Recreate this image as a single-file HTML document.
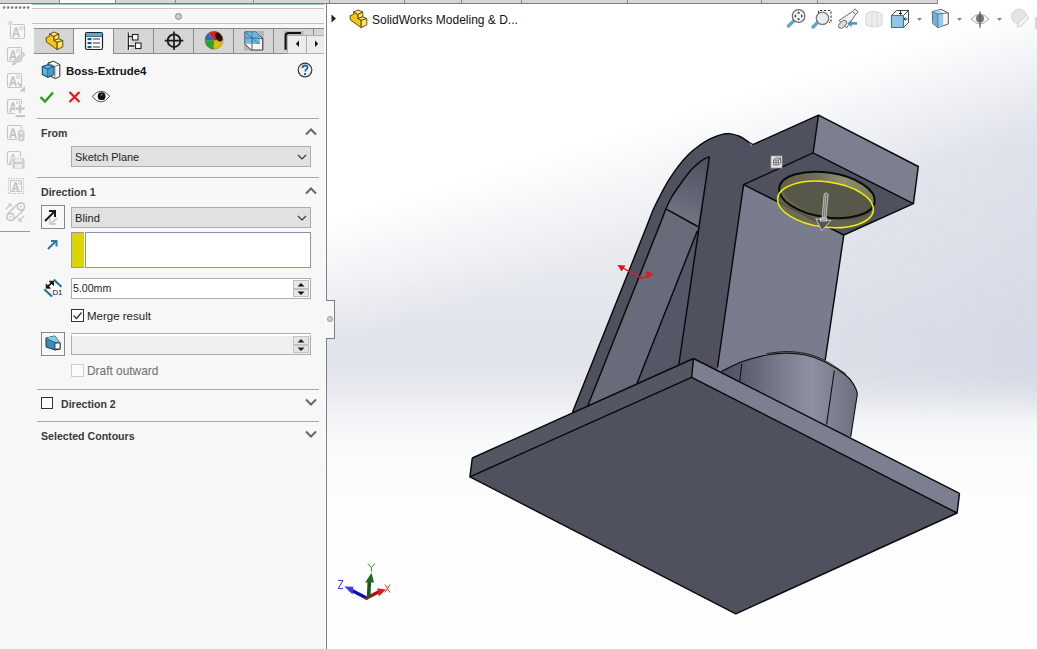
<!DOCTYPE html>
<html><head><meta charset="utf-8">
<style>
*{margin:0;padding:0;box-sizing:border-box}
html,body{width:1037px;height:649px;overflow:hidden;background:#fff;font-family:"Liberation Sans",sans-serif;position:relative}
.a{position:absolute}
.hl{position:absolute;height:1px;background:#a9a9a9}
.txt{position:absolute;white-space:nowrap;color:#1e1e1e;font-size:11px;line-height:13px}
.hdr{position:absolute;white-space:nowrap;color:#3a3a3a;font-size:10.6px;font-weight:bold;line-height:13px}
.dd{position:absolute;background:#e1e1e1;border:1px solid #adadad}
.chev{position:absolute}
</style></head><body>
<!-- top tab strip -->
<div class="a" style="left:0;top:0;width:938px;height:3px;background:#d6d6d6"></div>
<div class="a" style="left:60px;top:0;width:55px;height:3px;background:#fafafa"></div>
<div class="a" style="left:59px;top:0;width:1px;height:3px;background:#8a8a8a"></div><div class="a" style="left:115px;top:0;width:1px;height:3px;background:#8a8a8a"></div><div class="a" style="left:175px;top:0;width:1px;height:3px;background:#8a8a8a"></div><div class="a" style="left:253px;top:0;width:1px;height:3px;background:#8a8a8a"></div><div class="a" style="left:329px;top:0;width:1px;height:3px;background:#8a8a8a"></div><div class="a" style="left:404px;top:0;width:1px;height:3px;background:#8a8a8a"></div><div class="a" style="left:461px;top:0;width:1px;height:3px;background:#8a8a8a"></div><div class="a" style="left:521px;top:0;width:1px;height:3px;background:#8a8a8a"></div><div class="a" style="left:627px;top:0;width:1px;height:3px;background:#8a8a8a"></div><div class="a" style="left:761px;top:0;width:1px;height:3px;background:#8a8a8a"></div><div class="a" style="left:817px;top:0;width:1px;height:3px;background:#8a8a8a"></div><div class="a" style="left:937px;top:0;width:1px;height:3px;background:#8a8a8a"></div>
<div class="a" style="left:0;top:3px;width:938px;height:1px;background:#7d7d7d"></div>

<!-- left icon toolbar -->
<div class="a" style="left:0;top:4px;width:32px;height:645px;background:#f7f7f7"></div>
<div class="a" style="left:0;top:231px;width:30px;height:1px;background:#9a9a9a"></div>

<!-- property manager panel -->
<div class="a" style="left:32px;top:4px;width:294px;height:645px;background:#f7f7f7"></div>
<div class="a" style="left:32px;top:4px;width:292px;height:1px;background:#a3c3c6"></div>
<div class="a" style="left:32px;top:5px;width:292px;height:3px;background:#fbfbfb"></div>
<div class="a" style="left:32px;top:8px;width:292px;height:1px;background:#c4c4c4"></div>
<div class="a" style="left:175px;top:13px;width:7px;height:7px;border-radius:50%;background:#cfcfcf;border:1px solid #8a8a8a"></div>
<div class="a" style="left:32px;top:23px;width:292px;height:1px;background:#c0c0c0"></div>
<div class="a" style="left:324px;top:4px;width:2px;height:20px;background:#fdfdfd"></div><div class="a" style="left:325px;top:24px;width:1px;height:625px;background:#fcfcfc"></div>
<div class="a" style="left:326px;top:4px;width:1px;height:645px;background:#7f7f7f"></div>


<!-- left toolbar icons -->
<svg class="a" style="left:0;top:0" width="32" height="232" viewBox="0 0 32 232">
<rect x="0" y="4" width="32" height="6" fill="#fdfdfd"/>
<rect x="10.5" y="24.5" width="14" height="14" rx="1.5" fill="none" stroke="#c6c6c6" stroke-width="1.1"/>
<path d="M12.0,37.2 L14.9,27.2 H17.1 L20.0,37.2 H18.0 L17.4,34.8 H14.6 L14.0,37.2 Z M15.1,33.0 H16.9 L16.0,29.6 Z" fill="#c6c6c6" fill-rule="evenodd"/>
<circle cx="21.3" cy="28.2" r="1.6" fill="none" stroke="#c6c6c6" stroke-width="0.9"/>
<rect x="8" y="21" width="4.5" height="4.5" fill="#f7f7f7"/><path d="M10.3,20.5 v5 M7.8,23 h5 M8.5,21.2 l3.6,3.6 M12.1,21.2 l-3.6,3.6" stroke="#c6c6c6" stroke-width="0.7"/>
<rect x="7.5" y="47.5" width="14" height="14" rx="1.5" fill="none" stroke="#c6c6c6" stroke-width="1.1"/>
<path d="M9.0,60.3 L11.9,50.3 H14.1 L17.0,60.3 H15.0 L14.4,57.9 H11.6 L11.0,60.3 Z M12.1,56.1 H13.9 L13.0,52.7 Z" fill="#c6c6c6" fill-rule="evenodd"/>
<circle cx="18" cy="50.8" r="1.6" fill="none" stroke="#c6c6c6" stroke-width="0.9"/>
<path d="M12.5,65 L13.5,61 L22.5,52 L25,54.5 L16,63.5 Z" fill="#d4d4d4" stroke="#bdbdbd" stroke-width="0.8"/>
<rect x="7.5" y="73.5" width="14" height="14" rx="1.5" fill="none" stroke="#c6c6c6" stroke-width="1.1"/>
<path d="M9.0,86.3 L11.9,76.3 H14.1 L17.0,86.3 H15.0 L14.4,83.9 H11.6 L11.0,86.3 Z M12.1,82.1 H13.9 L13.0,78.7 Z" fill="#c6c6c6" fill-rule="evenodd"/>
<circle cx="18" cy="76.8" r="1.6" fill="none" stroke="#c6c6c6" stroke-width="0.9"/>
<path d="M17.5,82.5 L22,87" stroke="#c6c6c6" stroke-width="2"/><path d="M25,91.5 H19.5 L25,86 Z" fill="#c6c6c6"/>
<rect x="7.5" y="99.5" width="14" height="14" rx="1.5" fill="none" stroke="#c6c6c6" stroke-width="1.1"/>
<path d="M9.0,112.3 L11.9,102.3 H14.1 L17.0,112.3 H15.0 L14.4,109.9 H11.6 L11.0,112.3 Z M12.1,108.1 H13.9 L13.0,104.7 Z" fill="#c6c6c6" fill-rule="evenodd"/>
<circle cx="18" cy="102.8" r="1.6" fill="none" stroke="#c6c6c6" stroke-width="0.9"/>
<rect x="15" y="104" width="10" height="10" fill="#f7f7f7"/><path d="M20,104.5 v8.5 M15.7,108.7 h9" stroke="#c6c6c6" stroke-width="2.2"/><rect x="15.7" y="115" width="9.3" height="2.2" fill="#c6c6c6"/>
<rect x="7.5" y="125.5" width="14" height="14" rx="1.5" fill="none" stroke="#c6c6c6" stroke-width="1.1"/>
<path d="M9.0,138.3 L11.9,128.3 H14.1 L17.0,138.3 H15.0 L14.4,135.9 H11.6 L11.0,138.3 Z M12.1,134.1 H13.9 L13.0,130.7 Z" fill="#c6c6c6" fill-rule="evenodd"/>
<rect x="17.5" y="129" width="7.5" height="13" rx="3.7" fill="#cfcfcf" stroke="#f7f7f7" stroke-width="0.8"/><circle cx="21.2" cy="132.8" r="1.3" fill="#eee"/><circle cx="21.2" cy="138.2" r="1.3" fill="#eee"/>
<rect x="7.5" y="151.5" width="13" height="13" rx="1.5" fill="none" stroke="#c6c6c6" stroke-width="1.1"/>
<path d="M9.0,164.3 L11.9,154.3 H14.1 L17.0,164.3 H15.0 L14.4,161.9 H11.6 L11.0,164.3 Z M12.1,160.1 H13.9 L13.0,156.7 Z" fill="#c6c6c6" fill-rule="evenodd"/>
<path d="M12,157.5 h11 l2,2 v9.5 h-13 z" fill="#d0d0d0" stroke="#f7f7f7" stroke-width="0.8"/><rect x="15" y="158.5" width="7" height="3.5" fill="#eee"/><rect x="15" y="164" width="7" height="4" fill="#eee"/>
<rect x="8.5" y="178.5" width="15" height="15" fill="none" stroke="#c6c6c6" stroke-width="1.1" stroke-dasharray="1.5,1"/>
<rect x="10.5" y="180.5" width="11" height="11" fill="none" stroke="#c6c6c6" stroke-width="0.9"/>
<path d="M11.5,192.0 L14.4,182.0 H16.6 L19.5,192.0 H17.5 L16.9,189.6 H14.1 L13.5,192.0 Z M14.6,187.8 H16.4 L15.5,184.4 Z" fill="#c6c6c6" fill-rule="evenodd"/>
<circle cx="19.5" cy="183" r="1.4" fill="none" stroke="#c6c6c6" stroke-width="0.8"/>
<circle cx="10.5" cy="217" r="3.6" fill="none" stroke="#c6c6c6" stroke-width="1.6"/><circle cx="21" cy="206.5" r="3.6" fill="none" stroke="#c6c6c6" stroke-width="1.6"/><circle cx="10.5" cy="217" r="1" fill="#c6c6c6"/><circle cx="21" cy="206.5" r="1" fill="#c6c6c6"/>
<path d="M7.5,214 L18,203.5 M13.5,220 L24,209.5" stroke="#c6c6c6" stroke-width="1.4"/>
<path d="M6,209 l5,-5 M8,204 h3 v3 M19,221 l5,-5 M19,218 v3 h3" fill="none" stroke="#c6c6c6" stroke-width="1.1"/>
<circle cx="4" cy="7.5" r="1.3" fill="#6e6e6e"/><circle cx="3.5" cy="7" r="0.5" fill="#ddd"/><circle cx="8" cy="7.5" r="1.3" fill="#6e6e6e"/><circle cx="7.5" cy="7" r="0.5" fill="#ddd"/><circle cx="12" cy="7.5" r="1.3" fill="#6e6e6e"/><circle cx="11.5" cy="7" r="0.5" fill="#ddd"/><circle cx="16" cy="7.5" r="1.3" fill="#6e6e6e"/><circle cx="15.5" cy="7" r="0.5" fill="#ddd"/><circle cx="20" cy="7.5" r="1.3" fill="#6e6e6e"/><circle cx="19.5" cy="7" r="0.5" fill="#ddd"/><circle cx="24" cy="7.5" r="1.3" fill="#6e6e6e"/><circle cx="23.5" cy="7" r="0.5" fill="#ddd"/><circle cx="28" cy="7.5" r="1.3" fill="#6e6e6e"/><circle cx="27.5" cy="7" r="0.5" fill="#ddd"/>
</svg>

<!-- tab bar -->
<div class="a" style="left:34px;top:28px;width:290px;height:1px;background:#8a8a8a"></div>
<div class="a" style="left:34px;top:29px;width:290px;height:24px;background:#d5d5d5"></div>
<div class="a" style="left:34px;top:53px;width:290px;height:1px;background:#8a8a8a"></div>
<div class="a" style="left:74px;top:29px;width:39px;height:25px;background:#f7f7f7"></div>
<div class="a" style="left:73px;top:29px;width:1px;height:25px;background:#8a8a8a"></div>
<div class="a" style="left:113px;top:29px;width:1px;height:25px;background:#8a8a8a"></div>
<div class="a" style="left:153px;top:29px;width:1px;height:25px;background:#8a8a8a"></div>
<div class="a" style="left:193px;top:29px;width:1px;height:25px;background:#8a8a8a"></div>
<div class="a" style="left:233px;top:29px;width:1px;height:25px;background:#8a8a8a"></div>
<div class="a" style="left:273px;top:29px;width:1px;height:25px;background:#8a8a8a"></div>
<div class="a" style="left:313px;top:29px;width:1px;height:25px;background:#8a8a8a"></div>
<!-- tab icons -->
<svg class="a" style="left:34px;top:29px" width="290" height="25" viewBox="34 29 290 25">
 <!-- part icon -->
 <g stroke="#5a4000" stroke-width="0.9" stroke-linejoin="round">
 <path d="M46,37.8 L49.6,36.2 L49.6,34 L54,36.5 L54,40.5 L57.2,42.3 L57.2,49.6 L46.4,42 Z" fill="#f2c414"/>
 <path d="M49.6,34 L54,32 L58.8,34 L54,36.5 Z" fill="#ffe47a"/>
 <path d="M54,36.5 L58.8,34 L58.8,38.8 L54,40.5 Z" fill="#ffe45a"/>
 <path d="M54,40.5 L58.8,38.8 L62.8,40.5 L57.2,42.3 Z" fill="#ffec90"/>
 <path d="M57.2,42.3 L62.8,40.5 L62.8,46.8 L57.2,49.6 Z" fill="#ffe660"/>
 </g>
 <!-- property manager icon -->
 <rect x="85.5" y="32.5" width="17" height="17" rx="1.5" fill="#fff" stroke="#222" stroke-width="1.2"/>
 <rect x="86" y="33" width="16" height="3" fill="#5aa8d8"/>
 <path d="M86,36.5 h16" stroke="#1a4a6a" stroke-width="0.8"/>
 <rect x="87.5" y="38" width="4" height="2.2" fill="#1a5a8a"/><rect x="87.5" y="42" width="4" height="2.2" fill="#1a5a8a"/><rect x="87.5" y="46" width="4" height="2.2" fill="#1a5a8a"/>
 <path d="M93,39 h7 M93,43 h7 M93,47 h7" stroke="#333" stroke-width="1"/>
 <!-- config tree icon -->
 <path d="M128.3,32.5 v17.5 M128.3,36.5 h4 M128.3,46 h6" stroke="#fff" stroke-width="3.2" fill="none"/>
 <path d="M128.3,32.5 v17.5 M128.3,36.5 h4 M128.3,46 h6" stroke="#222" stroke-width="1.3" fill="none"/>
 <rect x="132.5" y="34.5" width="5.5" height="5.5" fill="#fff" stroke="#222" stroke-width="1.1"/><rect x="135.5" y="43" width="5.5" height="5.5" fill="#fff" stroke="#222" stroke-width="1.1"/>
 <!-- target/crosshair -->
 <circle cx="174" cy="40.7" r="6.3" fill="none" stroke="#1a1a1a" stroke-width="1.8"/>
 <path d="M174,31.5 v18.5 M164.8,40.7 h18.5" stroke="#1a1a1a" stroke-width="1.7"/>
 <!-- display manager ball -->
 <circle cx="214" cy="40.2" r="9" fill="#e0b818"/>
 <path d="M214,40.2 H205 A9,9 0 0 1 209,32.8 Z" fill="#2a6ad8"/>
 <path d="M214,40.2 L209,32.8 A9,9 0 0 1 223,40.2 Z" fill="#e02020"/>
 <path d="M214,40.2 H205 A9,9 0 0 0 213.5,49.2 Z" fill="#30a030"/>
 <ellipse cx="218.8" cy="37" rx="2.8" ry="4.8" transform="rotate(-30 218.8 37)" fill="#1a1a1a"/>
 <circle cx="214" cy="40.2" r="9" fill="none" stroke="#6a4a10" stroke-width="0.6" opacity="0.6"/>
 <!-- dimxpert -->
 <rect x="244" y="31" width="20" height="19.5" fill="#b4b4b4"/>
 <path d="M245,32 h10.5 l7.2,6.5 v11.5 h-11.5 l-6.2,-5.8 z" fill="#f4f4f4" stroke="#333" stroke-width="0.9"/>
 <path d="M245,32 l7,6.5 h10.7 M252,38.5 v11.5" fill="none" stroke="#333" stroke-width="0.8"/>
 <path d="M245,32 h10.5 l4.5,4 v8 h-8 l-7,-0.5 z" fill="#5aaad8" opacity="0.85"/>
 <path d="M245,32 l14,12 M245,38 h14 M252,32 v12" stroke="#1e6a98" stroke-width="0.7"/>
 <!-- partial tab -->
 <rect x="284" y="31" width="19.5" height="19.5" fill="#b8b8b8"/>
 <path d="M285.6,49.8 V36 q0,-3 3,-3 H301" fill="none" stroke="#111" stroke-width="2"/>
</svg>
<!-- scroll buttons -->
<div class="a" style="left:287px;top:35px;width:37px;height:19px;background:#b0b0b0"></div>
<div class="a" style="left:288px;top:36px;width:18px;height:17px;background:#ececec"></div>
<div class="a" style="left:307px;top:36px;width:17px;height:17px;background:#ececec"></div>
<svg class="a" style="left:287px;top:35px" width="37" height="19"><path d="M12,5.5 l-3.2,3.2 l3.2,3.2 z M28,5.5 v6.4 l3.2,-3.2 z" fill="#111"/></svg>
<!-- header -->
<svg class="a" style="left:38px;top:58px" width="26" height="24" viewBox="38 58 26 24">
 <path d="M48,63 L53.5,61.2 L59.8,64.6 V76.6 L55.4,78.6 L49.5,75.6 Z" fill="#fbfbfb" stroke="#2a2a2a" stroke-width="1"/>
 <path d="M48,63 L54.8,66.4 L59.8,64.6 M54.8,66.4 V78.2" fill="none" stroke="#555" stroke-width="0.8"/>
 <path d="M55.5,67 V77.5" stroke="#cfcfcf" stroke-width="1.2"/>
 <path d="M42.3,66.6 L48.2,64.6 L53.8,66.9 V74.6 L47.9,77.2 L42.3,74.6 Z" fill="#62b2dc" stroke="#0c4a70" stroke-width="1.1" stroke-linejoin="round"/>
 <path d="M42.3,66.6 L47.9,69 L53.8,66.9 M47.9,69 V77.2" fill="none" stroke="#0c4a70" stroke-width="0.9"/>
 <path d="M48.4,69.6 L53.3,67.7 V74.3 L48.4,76.4 Z" fill="#4a9ccb"/>
</svg>
<div class="txt" style="left:66px;top:64px;font-size:11.4px;font-weight:bold;color:#141420;line-height:14px">Boss-Extrude4</div>
<svg class="a" style="left:297px;top:62px" width="16" height="16" viewBox="0 0 16 16">
 <circle cx="8" cy="8" r="6.8" fill="#f0f0f0" stroke="#333" stroke-width="1.2"/>
 <path d="M5.5,6 q0,-2.5 2.5,-2.5 q2.5,0 2.5,2.2 q0,1.5 -2,2.3 v1.5" fill="none" stroke="#1a6aa0" stroke-width="1.8"/>
 <rect x="7" y="11" width="2" height="2" fill="#1a6aa0"/>
</svg>
<svg class="a" style="left:38px;top:89px" width="76" height="16" viewBox="0 0 76 16">
 <path d="M2.5,8 l4.5,4.5 l8,-9" fill="none" stroke="#2e9a1e" stroke-width="2.4"/>
 <path d="M31.5,3 l10,10 M41.5,3 l-10,10" stroke="#e01818" stroke-width="2.2"/>
 <path d="M54.2,7.5 Q63,-3 71.8,7.2 Q63,18.6 54.2,7.5 Z" fill="#fff" stroke="#3a3a3a" stroke-width="0.9"/>
 <circle cx="63.6" cy="7.2" r="3.9" fill="#111"/><path d="M63,6.6 q0.3,-1.4 1.6,-0.9" stroke="#ddd" stroke-width="0.9" fill="none"/>
</svg>
<div class="hl" style="left:37px;top:118px;width:282px"></div>

<!-- From -->
<div class="hdr" style="left:41px;top:127px">From</div>
<svg class="a" style="left:303px;top:126px" width="16" height="12"><path d="M3,8.5 l5,-5 l5,5" fill="none" stroke="#666" stroke-width="2"/></svg>
<div class="dd" style="left:71px;top:146px;width:240px;height:21px"></div>
<div class="txt" style="left:75px;top:151px;font-size:10.9px">Sketch Plane</div>
<svg class="a" style="left:295px;top:151px" width="14" height="12"><path d="M3,4 l4,4 l4,-4" fill="none" stroke="#333" stroke-width="1.1"/></svg>
<div class="hl" style="left:37px;top:177px;width:282px"></div>

<!-- Direction 1 -->
<div class="hdr" style="left:41px;top:186px">Direction 1</div>
<svg class="a" style="left:303px;top:185px" width="16" height="12"><path d="M3,8.5 l5,-5 l5,5" fill="none" stroke="#666" stroke-width="2"/></svg>
<div class="a" style="left:41px;top:205px;width:24px;height:24px;border:1px solid #888;background:#f8f8f8"></div>
<svg class="a" style="left:41px;top:205px" width="24" height="24">
 <path d="M16,13 l-6,6 M9,13 v6 h6" fill="none" stroke="#cfcfcf" stroke-width="2"/>
 <path d="M4,16 l9,-9 M8,6 h6 v6" fill="none" stroke="#1a1a1a" stroke-width="2"/>
</svg>
<div class="dd" style="left:71px;top:207px;width:240px;height:21px"></div>
<div class="txt" style="left:75px;top:212px;font-size:11.2px">Blind</div>
<svg class="a" style="left:295px;top:212px" width="14" height="12"><path d="M3,4 l4,4 l4,-4" fill="none" stroke="#333" stroke-width="1.1"/></svg>
<svg class="a" style="left:45px;top:237px" width="16" height="16"><path d="M3,12 l8,-8 M6,4 h5.5 v5.5" fill="none" stroke="#2a7aa8" stroke-width="2"/></svg>
<div class="a" style="left:71px;top:232px;width:13px;height:36px;background:#dcd400;border:1px solid #9a9a9a;border-right:none"></div>
<div class="a" style="left:85px;top:232px;width:226px;height:36px;background:#fff;border:1px solid #8894aa"></div>

<svg class="a" style="left:40px;top:275px" width="26" height="26" viewBox="40 275 26 26">
 <path d="M44.3,289.2 L52,296.4 M53.8,279.6 L61.4,286.8" stroke="#1e6e9e" stroke-width="2"/>
 <path d="M47.5,286.8 L52.3,282.2" stroke="#111" stroke-width="1.6"/>
 <path d="M46.2,284 v4.2 h4.2 z M53.6,281.2 h-4.4 l4.4,4.4 z" fill="#111" stroke="#111" stroke-width="0.8"/>
 <text x="52.6" y="295" font-family="Liberation Sans" font-size="7.8" fill="#111" letter-spacing="-0.3">D1</text>
</svg>
<div class="a" style="left:71px;top:278px;width:240px;height:21px;background:#fff;border:1px solid #adadad"></div>
<div class="txt" style="left:73px;top:282px;font-size:10.6px">5.00mm</div>
<div class="a" style="left:293px;top:280px;width:16px;height:9px;background:#e8e8e8;border:1px solid #c0c0c0"></div>
<div class="a" style="left:293px;top:289px;width:16px;height:8px;background:#e8e8e8;border:1px solid #c0c0c0"></div>
<svg class="a" style="left:293px;top:280px" width="16" height="18"><path d="M4.5,6.5 h7 l-3.5,-3.5 z M4.5,11.5 h7 l-3.5,3.5 z" fill="#111"/></svg>

<div class="a" style="left:71px;top:309px;width:13px;height:13px;border:1px solid #333;background:#fff"></div>
<svg class="a" style="left:71px;top:309px" width="13" height="13"><path d="M2.5,6.5 l3,3 l5,-6" fill="none" stroke="#333" stroke-width="1.2"/></svg>
<div class="txt" style="left:87px;top:310px;font-size:11.5px">Merge result</div>

<div class="a" style="left:41px;top:332px;width:24px;height:24px;border:1px solid #888;background:#f8f8f8"></div>
<svg class="a" style="left:41px;top:332px" width="24" height="24" viewBox="0 0 24 24">
 <path d="M5,6 l9,-2 l5,7 v6 l-5,1 l-9,-3 z" fill="#3c8ab4" stroke="#123a52" stroke-width="1"/>
 <path d="M5,6 l9,4 l5,1" fill="none" stroke="#123a52" stroke-width="0.9"/>
 <path d="M5,6 l9,-2 l5,7 l-5,-1 z" fill="#8ccae8"/>
 <rect x="14" y="11" width="5" height="6" fill="#fff" stroke="#222" stroke-width="0.8"/>
</svg>
<div class="a" style="left:71px;top:334px;width:240px;height:21px;background:#efefef;border:1px solid #adadad;border-top:2px solid #fff;box-shadow:0 -1px 0 #adadad"></div>
<div class="a" style="left:293px;top:336px;width:16px;height:9px;background:#e4e4e4;border:1px solid #c4c4c4"></div>
<div class="a" style="left:293px;top:345px;width:16px;height:8px;background:#e4e4e4;border:1px solid #c4c4c4"></div>
<svg class="a" style="left:293px;top:336px" width="16" height="18"><path d="M4.5,6.5 h7 l-3.5,-3.5 z M4.5,11.5 h7 l-3.5,3.5 z" fill="#222"/></svg>
<div class="a" style="left:71px;top:364px;width:13px;height:13px;border:1px solid #cdcdcd;background:#fbfbfb"></div>
<div class="txt" style="left:87px;top:365px;font-size:11.9px;color:#6d6d6d">Draft outward</div>
<div class="hl" style="left:37px;top:389px;width:282px"></div>

<!-- Direction 2 -->
<div class="a" style="left:41px;top:397px;width:12px;height:12px;border:1px solid #333;background:#fff"></div>
<div class="hdr" style="left:61px;top:398px">Direction 2</div>
<svg class="a" style="left:303px;top:396px" width="16" height="12"><path d="M3,3.5 l5,5 l5,-5" fill="none" stroke="#666" stroke-width="2"/></svg>
<div class="hl" style="left:37px;top:421px;width:282px"></div>
<div class="hdr" style="left:41px;top:430px">Selected Contours</div>
<svg class="a" style="left:303px;top:428px" width="16" height="12"><path d="M3,3.5 l5,5 l5,-5" fill="none" stroke="#666" stroke-width="2"/></svg>

<!-- viewport -->
<div class="a" id="vp" style="left:327px;top:4px;width:710px;height:645px;background:linear-gradient(180deg,#f0f1f5 0px,#ebedf1 150px,#e7e9ef 260px,#e1e4eb 328px,#e1e4eb 362px,#e8eaef 388px,#f2f3f6 410px,#f9fafb 438px,#fdfdfd 500px,#fefefe 645px)"></div>
<div class="a" style="left:327px;top:4px;width:710px;height:645px;background:linear-gradient(90deg,rgba(196,202,220,0) 0%,rgba(196,202,220,0) 45%,rgba(196,202,220,0.4) 100%);-webkit-mask-image:linear-gradient(180deg,rgba(0,0,0,0.55) 0px,#000 290px,#000 375px,rgba(0,0,0,0) 418px);mask-image:linear-gradient(180deg,rgba(0,0,0,0.55) 0px,#000 290px,#000 375px,rgba(0,0,0,0) 418px)"></div>
<div class="a" style="left:327px;top:4px;width:710px;height:645px;background:linear-gradient(163deg,#ffffff 0%,#ffffff 25%,rgba(255,255,255,0.5) 32%,rgba(255,255,255,0) 40%)"></div>


<!-- splitter handle -->
<div class="a" style="left:326px;top:300px;width:9px;height:39px;background:#f7f7f7;border:1px solid #7f7f7f;border-left:none"></div>
<div class="a" style="left:326px;top:301px;width:1px;height:37px;background:#f7f7f7"></div>
<div class="a" style="left:327px;top:316px;width:6px;height:6px;border-radius:50%;background:#d0d0d0;border:1px solid #9a9a9a"></div>

<!-- feature tree header -->
<svg class="a" style="left:331px;top:14px" width="6" height="9"><path d="M0.5,0.5 L5,4.5 L0.5,8.5 Z" fill="#222"/></svg>
<svg class="a" style="left:346px;top:8px" width="22" height="22" viewBox="42 30 22 22">
 <g stroke="#5a4000" stroke-width="0.9" stroke-linejoin="round">
 <path d="M46,37.8 L49.6,36.2 L49.6,34 L54,36.5 L54,40.5 L57.2,42.3 L57.2,49.6 L46.4,42 Z" fill="#f2c414"/>
 <path d="M49.6,34 L54,32 L58.8,34 L54,36.5 Z" fill="#ffe47a"/>
 <path d="M54,36.5 L58.8,34 L58.8,38.8 L54,40.5 Z" fill="#ffe45a"/>
 <path d="M54,40.5 L58.8,38.8 L62.8,40.5 L57.2,42.3 Z" fill="#ffec90"/>
 <path d="M57.2,42.3 L62.8,40.5 L62.8,46.8 L57.2,49.6 Z" fill="#ffe660"/>
 </g>
</svg>
<div class="txt" style="left:372px;top:13px;font-size:12px;color:#111;line-height:14px">SolidWorks Modeling &amp; D...</div>

<!-- heads-up view toolbar -->
<svg class="a" style="left:780px;top:4px" width="257" height="30" viewBox="780 4 257 30">
 <!-- zoom to fit -->
 <path d="M788.5,26 l5,-5" stroke="#5fa6cc" stroke-width="3.4" stroke-linecap="round"/>
 <circle cx="798.6" cy="16" r="6.3" fill="#f0f4f7" stroke="#6e6e6e" stroke-width="1.3"/>
 <path d="M798.6,11.5 l-1.7,2 h3.4 z M798.6,20.5 l-1.7,-2 h3.4 z M794.1,16 l2,-1.7 v3.4 z M803.1,16 l-2,-1.7 v3.4 z" fill="#333"/>
 <!-- zoom area -->
 <path d="M818.5,13 V10.5 H831 V22.5 H829" fill="none" stroke="#333" stroke-width="1.1" stroke-dasharray="2.2,1.8"/>
 <path d="M813,27 l5,-5" stroke="#5fa6cc" stroke-width="3.4" stroke-linecap="round"/>
 <circle cx="822.5" cy="18.3" r="6.2" fill="#e6eef3" stroke="#7a7a7a" stroke-width="1.3"/>
 <!-- previous view -->
 <path d="M839,20.5 L852.5,11.5 L855.5,14.5 L846.5,28 Z" fill="#f2f2f2" stroke="#6a6a6a" stroke-width="1"/>
 <path d="M852.5,11.5 L855,8.8 L858.2,12 L855.5,14.5 Z" fill="#ebebeb" stroke="#6a6a6a" stroke-width="1"/>
 <ellipse cx="842.6" cy="24.3" rx="2.8" ry="5" transform="rotate(45 842.6 24.3)" fill="#dcdcdc" stroke="#666" stroke-width="0.9"/>
 <path d="M857,23.4 h-6.5" stroke="#4f95c0" stroke-width="2.6"/>
 <path d="M847.4,23.4 l4.2,-3.8 v7.6 z" fill="#4f95c0"/>
 <!-- section view (disabled) -->
 <path d="M866,14 q8,-5 16,0 v11 q-8,4 -16,0 z" fill="#eeeeee" stroke="#d4d4d4" stroke-width="1"/>
 <path d="M872,13 v13 M877,13 v13" stroke="#d8d8d8" stroke-width="1"/>
 <!-- view orientation -->
 <path d="M891.5,15.5 L896.5,10.5 H908.5 V22.5 L903.5,27.5" fill="#fff" stroke="#444" stroke-width="1"/>
 <path d="M903.5,15.5 L908.5,10.5 M903.5,27.5 L908.5,22.5" stroke="#444" stroke-width="1"/>
 <path d="M900.5,11 v3.5 M899,13 l1.5,1.5 l1.5,-1.5 M907.5,19 h-3.5 M905.5,17.5 l-1.5,1.5 l1.5,1.5" fill="none" stroke="#222" stroke-width="1"/>
 <rect x="891.5" y="15.5" width="12" height="12" fill="#8ec8e6" stroke="#3a7698" stroke-width="1.1"/>
 <path d="M917,18 h5 l-2.5,3 z" fill="#888"/>
 <!-- display style -->
 <path d="M932.2,11.6 L941.1,9.3 L948.3,12.9 V24 L937.8,27.6 L932.9,23.7 Z" fill="#f7f7f7" stroke="#555" stroke-width="1"/>
 <path d="M932.6,11.8 L937.8,14 V27.2 L933.2,23.5 Z" fill="#72b0d4"/>
 <path d="M937.8,14 L943.2,13.4 V25.8 L937.8,27.6 Z" fill="#92cbe8"/>
 <path d="M932.6,11.6 L938,10.2 L943.2,13.2 L937.8,14 Z" fill="#a6d6ee"/>
 <path d="M932.2,11.6 L937.8,14 L948.3,12.9 M937.8,14 V27.6" fill="none" stroke="#4a6e84" stroke-width="0.9"/>
 <path d="M957,18 h5 l-2.5,3 z" fill="#888"/>
 <!-- hide/show -->
 <path d="M971,19 q9,-10 18,0 q-9,10 -18,0 z" fill="#f4f4f4" stroke="#aaa" stroke-width="1"/>
 <circle cx="980" cy="18.5" r="4" fill="#777"/>
 <path d="M980,11.5 v16" stroke="#555" stroke-width="1.3"/>
 <path d="M997,18 h5 l-2.5,3 z" fill="#888"/>
 <!-- appearance (disabled) -->
 <circle cx="1019" cy="16.5" r="7.5" fill="#e4e4e4" stroke="#d8d8d8"/>
 <path d="M1017,27 l1,-4 l8,-8 l3,3 l-8,8 z" fill="#f0f0f0" stroke="#d0d0d0" stroke-width="1"/>
 <rect x="1035" y="17" width="2" height="12" fill="#d8d8d8"/>
</svg>

<!-- triad -->
<svg class="a" style="left:330px;top:555px" width="70" height="55" viewBox="330 555 70 55">
 <path d="M366.5,598 L350,589.5" stroke="#1010b8" stroke-width="3.4" stroke-linecap="round"/>
 <path d="M344.4,586.6 L353.4,586.8 L352.6,594.6 Z" fill="#3a3ae8"/>
 <path d="M366.5,598 L379,591.8" stroke="#a01414" stroke-width="3.4" stroke-linecap="round"/>
 <path d="M386,589.6 L377.2,588.3 L378.8,596.6 Z" fill="#d42020"/>
 <path d="M368.6,598 L369.4,580" stroke="#1a5a1a" stroke-width="3.6"/>
 <path d="M371.5,572.8 L365.2,582.5 L374,582.5 Z" fill="#1e6a1e"/>
 <path d="M368,563.5 l3.4,4.2 l3.4,-4.2 M371.4,567.7 v4" fill="none" stroke="#109010" stroke-width="0.9"/>
 <path d="M338.2,580.4 h4.8 l-4.8,8.2 h4.8" fill="none" stroke="#1a1ae8" stroke-width="0.9"/>
 <path d="M385,584.5 l5,8 M390,584.5 l-5,8" fill="none" stroke="#e81a1a" stroke-width="0.9"/>
</svg>

<!--MODEL--><svg class="a" style="left:0;top:0" width="1037" height="649" viewBox="0 0 1037 649"><defs>
<linearGradient id="gtri" x1="700" y1="160" x2="680" y2="215" gradientUnits="userSpaceOnUse"><stop offset="0" stop-color="#50535f"/><stop offset="1" stop-color="#6e7281"/></linearGradient>
<linearGradient id="gcyl" x1="722" y1="0" x2="858" y2="0" gradientUnits="userSpaceOnUse"><stop offset="0" stop-color="#4e5160"/><stop offset="0.15" stop-color="#5a5d6c"/><stop offset="0.45" stop-color="#7a7e8e"/><stop offset="0.66" stop-color="#8d91a1"/><stop offset="0.82" stop-color="#7c8090"/><stop offset="1" stop-color="#6a6e7d"/></linearGradient>
<linearGradient id="ghole" x1="778" y1="0" x2="875" y2="0" gradientUnits="userSpaceOnUse"><stop offset="0" stop-color="#5e5e4c"/><stop offset="0.35" stop-color="#6e6e56"/><stop offset="0.65" stop-color="#8e8e70"/><stop offset="1" stop-color="#77775d"/></linearGradient>
</defs>
<path d="M572.3,412.7 L646.6,226.6 C647.9,223.4 651.8,212.8 654.3,207.3 C656.8,201.8 658.9,197.9 661.3,193.4 C663.7,188.9 665.9,184.8 668.7,180.2 C671.6,175.6 674.9,170.6 678.4,166.1 C681.9,161.6 686.5,156.5 690.0,153.1 C693.5,149.7 696.1,147.9 699.2,145.7 C702.3,143.5 705.4,141.4 708.5,139.7 C711.6,138.0 714.6,136.6 718.0,135.6 C721.4,134.6 725.3,133.5 728.8,133.6 C732.3,133.7 736.3,135.1 738.8,136.0 C741.3,136.9 742.4,137.8 744.0,138.8 C745.6,139.8 747.1,141.1 748.5,142.0 C749.9,142.9 751.5,144.0 752.1,144.4 L753.5,144.3 L818.5,115.1 L813.1,152.9 L743.6,184.6 L717.5,367.5 L745,385 L700,400 L560,440 Z" fill="#4f525e"/>
<path d="M709.4,156.6 C707.9,157.4 703.4,159.2 700.5,161.3 C697.6,163.4 695.1,165.7 692.0,169.1 C688.9,172.5 685.4,177.1 682.1,181.7 C678.8,186.3 674.7,192.0 672.0,196.5 C669.3,201.0 666.9,206.8 665.9,208.8 L697.7,226.5 Z" fill="url(#gtri)"/>
<path d="M665.9,208.8 L697.7,226.5 L697.3,231 L637,383.5 L587.7,406 L661.7,220 L665.9,208.8 Z" fill="#676b7a"/>
<path d="M697.7,226.5 L697.3,231 L637,383.5 L678.7,365.5 Z" fill="#545766"/>
<polygon points="818.5,115.1 918.3,166.5 913.4,203.6 813.1,152.9" fill="#7b7f8f"/>
<polygon points="813.1,152.9 913.4,203.6 843.8,235.0 743.6,184.6" fill="#4f525e"/>
<polygon points="743.6,184.6 843.8,235.0 825.2,360.0 826.0,380.0 717.0,380.0 717.5,367.5" fill="#787c8c"/>
<path d="M721.5,371.5 C724.9,369.9 734.2,364.6 741.7,361.8 C749.2,359.1 759.4,356.4 766.8,355.0 C774.2,353.6 779.6,353.1 786.0,353.1 C792.4,353.1 799.0,353.6 805.4,355.0 C811.8,356.4 817.9,358.4 824.6,361.8 C831.4,365.2 840.9,371.3 845.9,375.3 C850.9,379.3 852.6,382.9 854.5,386.0 C856.4,389.1 856.9,392.3 857.4,393.6 L850.7,437 L720,440 Z" fill="url(#gcyl)"/>
<path d="M721.5,371.5 C724.9,369.9 734.2,364.6 741.7,361.8 C749.2,359.1 759.4,356.4 766.8,355.0 C774.2,353.6 779.6,353.1 786.0,353.1 C792.4,353.1 799.0,353.6 805.4,355.0 C811.8,356.4 817.9,358.4 824.6,361.8 C831.4,365.2 840.9,371.3 845.9,375.3 C850.9,379.3 852.6,382.9 854.5,386.0 C856.4,389.1 856.9,392.3 857.4,393.6" fill="none" stroke="#111" stroke-width="1.2"/>
<path d="M766.8,353.5 C770.0,353.2 779.6,351.6 786.0,351.6 C792.4,351.6 799.0,352.1 805.4,353.5 C811.8,354.9 817.9,356.9 824.6,360.3 C831.4,363.7 842.4,371.7 845.9,374.0" fill="none" stroke="#111" stroke-width="0.9"/>
<path d="M857.4,393.6 L850.7,437 M741.7,363.8 L739.8,381 M834.3,370.5 L826.6,424.5" stroke="#111" stroke-width="1.1" fill="none"/>
<polygon points="472.3,458.0 693.5,358.5 691.6,377.3 469.9,476.9" fill="#535663"/>
<polygon points="693.5,358.5 959.5,493.3 957.1,513.0 691.6,377.3" fill="#7b7f8f"/>
<polygon points="469.9,476.9 691.6,377.3 957.1,513.0 735.8,613.8" fill="#4f525e"/>
<path d="M572.3,412.7 L646.6,226.6 C647.9,223.4 651.8,212.8 654.3,207.3 C656.8,201.8 658.9,197.9 661.3,193.4 C663.7,188.9 665.9,184.8 668.7,180.2 C671.6,175.6 674.9,170.6 678.4,166.1 C681.9,161.6 686.5,156.5 690.0,153.1 C693.5,149.7 696.1,147.9 699.2,145.7 C702.3,143.5 705.4,141.4 708.5,139.7 C711.6,138.0 714.6,136.6 718.0,135.6 C721.4,134.6 725.3,133.5 728.8,133.6 C732.3,133.7 736.3,135.1 738.8,136.0 C741.3,136.9 742.4,137.8 744.0,138.8 C745.6,139.8 747.1,141.1 748.5,142.0 C749.9,142.9 751.5,144.0 752.1,144.4 L753.5,144.3 L818.5,115.1 L918.3,166.5 L913.4,203.6 M818.5,115.1 L813.1,152.9 L913.4,203.6 L843.8,235.0 L743.6,184.6 L813.1,152.9 M743.6,184.6 L717.5,367.5 M843.8,235.0 L825.2,360 M709.4,156.6 C707.9,157.4 703.4,159.2 700.5,161.3 C697.6,163.4 695.1,165.7 692.0,169.1 C688.9,172.5 685.4,177.1 682.1,181.7 C678.8,186.3 674.7,192.0 672.0,196.5 C669.3,201.0 666.9,206.8 665.9,208.8 L697.7,226.5 M709.4,156.9 L678.7,365.5 M697.3,231 L637,383.5 M665.9,208.8 L661.7,220 L587.7,406 M469.9,476.9 L691.6,377.3 L957.1,513.0 L735.8,613.8 Z M691.6,377.3 L469.9,476.9 L472.3,458.0 M472.3,458.0 L693.5,358.5 M693.5,358.5 L959.5,493.3 M693.5,358.5 L691.6,377.3 M959.5,493.3 L957.1,513.0" fill="none" stroke="#0a0a0a" stroke-width="1.45" stroke-linejoin="round"/>
<clipPath id="cpb"><ellipse cx="826.9" cy="194.9" rx="48.3" ry="22.3" transform="rotate(8.5 826.9 194.9)"/></clipPath>
<ellipse cx="826.9" cy="194.9" rx="48.3" ry="22.3" transform="rotate(8.5 826.9 194.9)" fill="url(#ghole)"/>
<ellipse cx="825.5" cy="204.4" rx="48.3" ry="22.6" transform="rotate(7.5 825.5 204.4)" fill="#68684c" fill-opacity="0.78"/>
<ellipse cx="825.5" cy="204.4" rx="48.3" ry="22.6" transform="rotate(7.5 825.5 204.4)" fill="#58584a" clip-path="url(#cpb)"/>
<ellipse cx="826.9" cy="194.9" rx="48.3" ry="22.3" transform="rotate(8.5 826.9 194.9)" fill="none" stroke="#0a0a0a" stroke-width="2"/>
<ellipse cx="825.5" cy="204.4" rx="48.3" ry="22.6" transform="rotate(7.5 825.5 204.4)" fill="none" stroke="#f2ee00" stroke-width="1.5"/>
<path d="M749.3,142.6 L752.6,144.9 L751.4,146.6 Z" fill="#8d93ab"/>
<path d="M824.2,193.8 Q826.3,191.8 828.2,194 L826,218 L822.2,217.8 Z" fill="#777" stroke="#dcdcdc" stroke-width="0.7"/><path d="M825.8,195 L824.3,217" stroke="#a8a8a8" stroke-width="1"/>
<path d="M815.8,218.8 L830.8,220.6 L821.8,230.6 Z" fill="#555" stroke="#dcdcdc" stroke-width="0.8"/>
<rect x="820.5" y="218" width="6" height="3" fill="none" stroke="#eee" stroke-width="0.8"/>
<rect x="771" y="156" width="11" height="12" fill="#e8e8e8" stroke="#999" stroke-width="0.8"/>
<path d="M773.5,160 h5 v5 h-5 z M773.5,160 l2,-2 h5 l-2,2 M778.5,165 l2,-2 v-5 M773.5,162.5 h5 M776,160 v5" fill="none" stroke="#555" stroke-width="0.8"/>
<path d="M621,267 L641.7,278.2 L650,275" fill="none" stroke="#e8141c" stroke-width="1.4"/>
<path d="M617.5,265 L625.5,265.5 L621.5,271.5 Z M653.5,274 L646,271 L647,278.5 Z" fill="#e8141c"/>
</svg><!--/MODEL-->
</body></html>
